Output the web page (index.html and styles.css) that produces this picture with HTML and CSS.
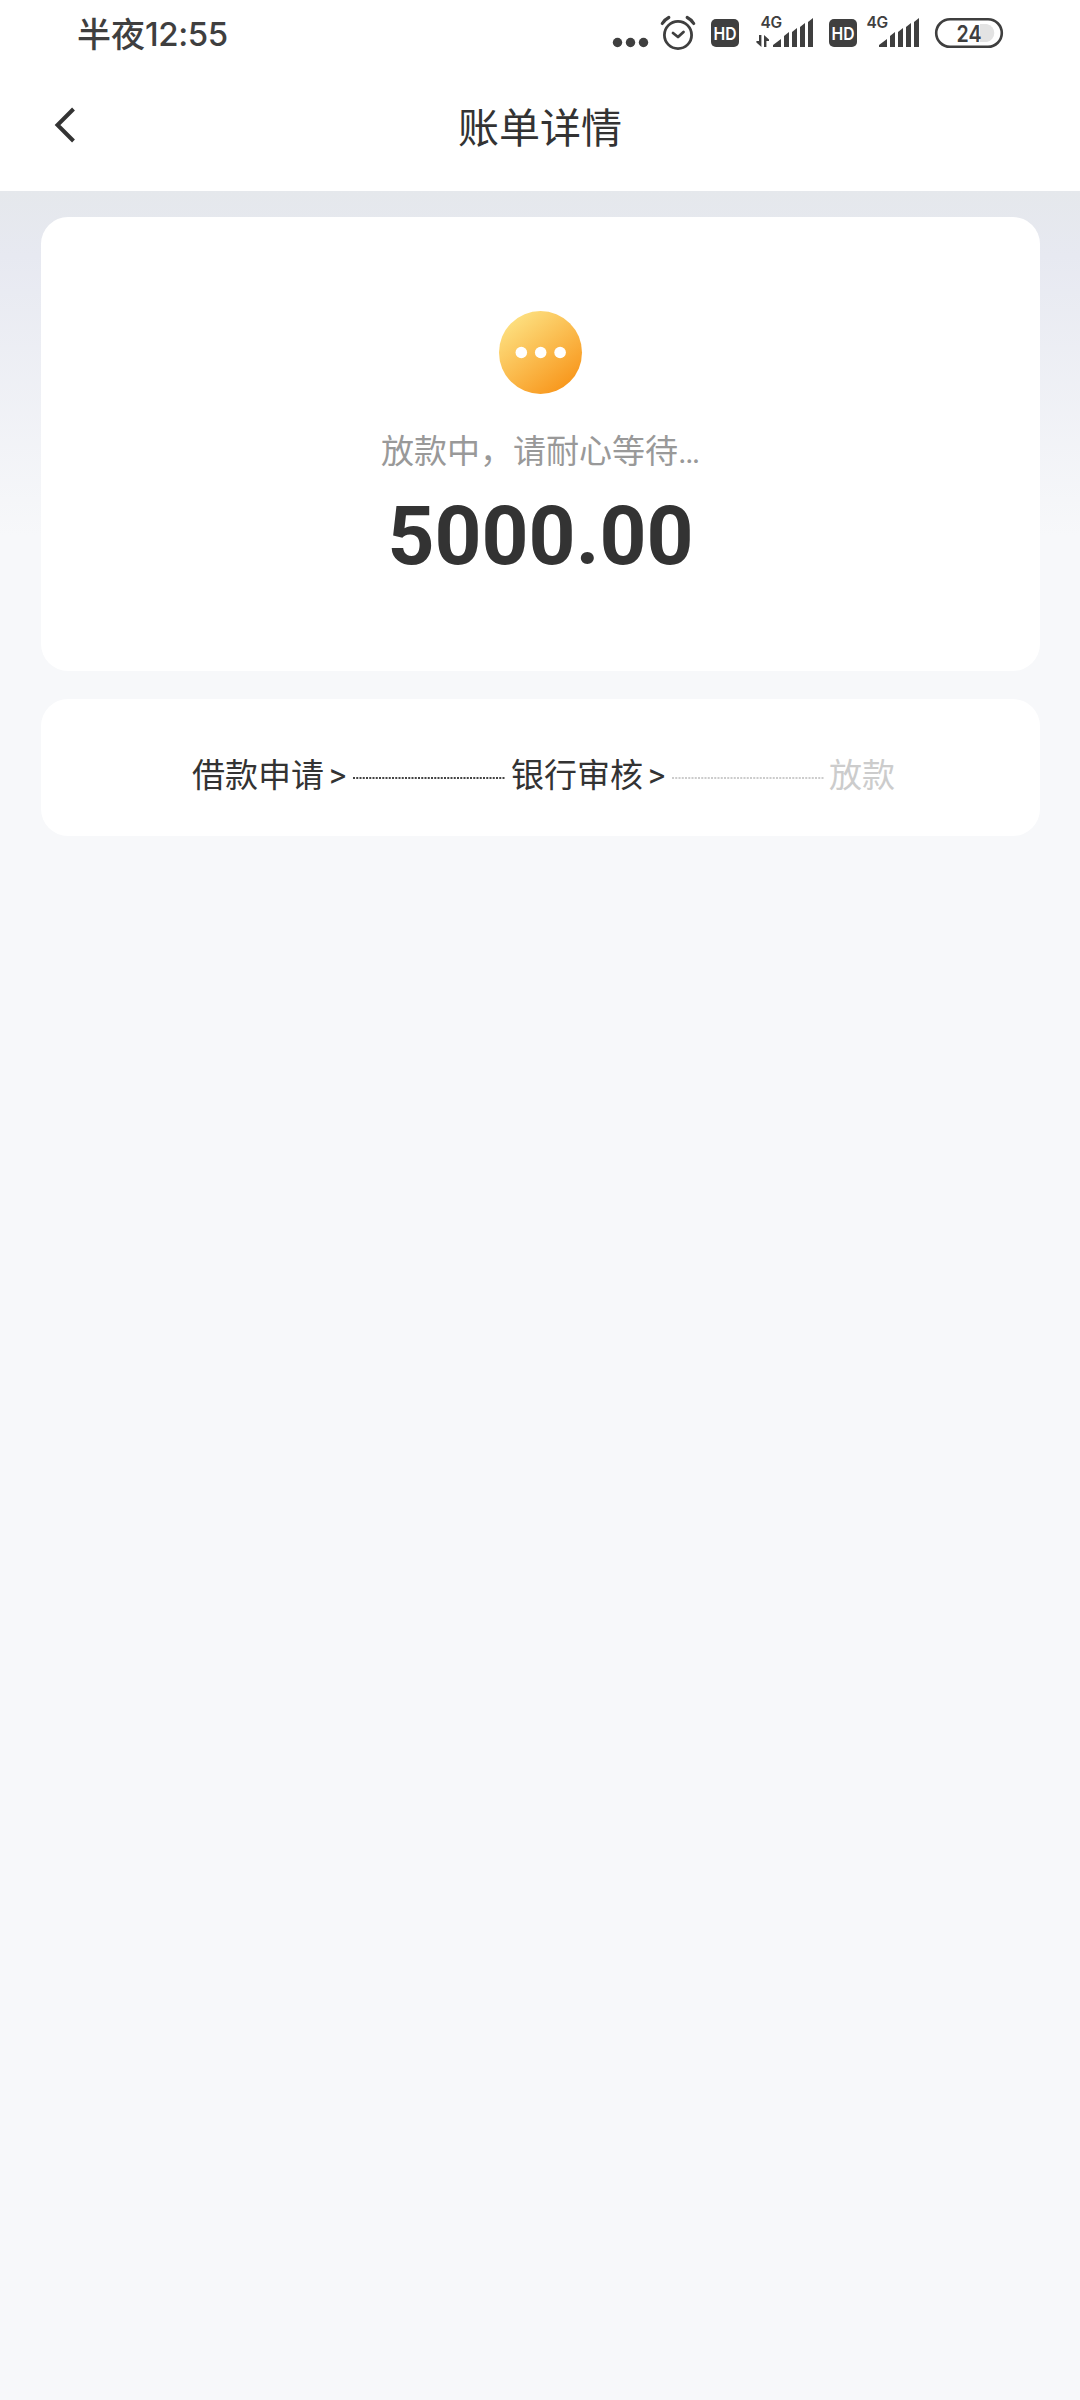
FILE: index.html
```html
<!DOCTYPE html>
<html lang="zh-CN">
<head>
<meta charset="utf-8">
<title>账单详情</title>
<link rel="stylesheet" href="styles.css">
</head>
<body>
<div class="status">
  <div class="clock"><span class="period">半夜</span><span class="time">12:55</span></div>
  <svg class="status-icons" width="400" height="64" viewBox="0 0 400 64">
    <g fill="#3f3f3f">
      <circle cx="17.5" cy="42.5" r="4.7"/><circle cx="30.5" cy="42.5" r="4.7"/><circle cx="43.5" cy="42.5" r="4.7"/>
      <rect x="111" y="19" width="28" height="28" rx="5"/>
      <rect x="229" y="19" width="28" height="28" rx="5"/>
      <path d="M173 47v-2l8-6v8zM184 47V36l5-4v15zM192 47V32l5-4v19zM200 47V27l5-4v24zM208 47V22l5-4v29z"/>
      <path d="M279 47v-2l8-6v8zM290 47V36l5-4v15zM298 47V32l5-4v19zM306 47V27l5-4v24zM314 47V22l5-4v29z"/>
      <path d="M159 35h2.400v12l-5-4.500v-1.500h2.600zM164 47h2.400V41h2.600v-1.500l-5-4.500z"/>
    </g>
    <g fill="none" stroke="#3f3f3f" stroke-width="2.800" stroke-linecap="round" stroke-linejoin="round">
      <circle cx="78" cy="35" r="13.600"/>
      <path d="M73 33l5 4 5.500-5" /><path d="M62.300 23.500q2.500-4 6.500-6M93.700 23.500q-2.500-4-6.500-6" stroke-width="3.200"/>
    </g>
    <path d="M380 24h7a9.200 9.200 0 0 1 0 18h-7z" fill="#e3e3e3"/>
    <rect x="336.200" y="19.200" width="65.600" height="27.600" rx="13.800" fill="none" stroke="#3f3f3f" stroke-width="2.600"/>
    <g class="icon-text">
      <text x="125" y="39.500" font-size="17.500" fill="#fff" text-anchor="middle" textLength="23" lengthAdjust="spacingAndGlyphs">HD</text>
      <text x="243" y="39.500" font-size="17.500" fill="#fff" text-anchor="middle" textLength="23" lengthAdjust="spacingAndGlyphs">HD</text>
      <text x="160.500" y="28" font-size="15.500" fill="#3f3f3f" textLength="21.500">4G</text>
      <text x="266.500" y="28" font-size="15.500" fill="#3f3f3f" textLength="21.500">4G</text>
      <text x="356.500" y="41.500" font-size="23" fill="#3f3f3f" textLength="25" lengthAdjust="spacingAndGlyphs">24</text>
    </g>
  </svg>
</div>
<header class="nav">
  <svg class="back" width="24" height="40" viewBox="0 0 24 40"><path d="M20.500 4L4.500 20l16 16" fill="none" stroke="#333" stroke-width="4"/></svg>
  <h1 class="title">账单详情</h1>
</header>
<main class="page">
  <section class="card summary">
    <svg class="badge" width="84" height="84" viewBox="0 0 84 84">
      <defs><linearGradient id="amber" x1="0.150" y1="0.100" x2="0.800" y2="0.950"><stop offset="0" stop-color="#fde080"/><stop offset="1" stop-color="#f8961b"/></linearGradient></defs>
      <circle cx="41.500" cy="42.500" r="41.500" fill="url(#amber)"/>
      <g fill="#fff"><circle cx="22.300" cy="42.500" r="5.800"/><circle cx="41.700" cy="42.500" r="5.800"/><circle cx="61.100" cy="42.500" r="5.800"/></g>
    </svg>
    <p class="hint">放款中，请耐心等待…</p>
    <p class="amount">5000.00</p>
  </section>
  <section class="card steps">
    <span class="step">借款申请</span><span class="arrow">&gt;</span><svg class="line" width="152" height="2"><path d="M0 1h152"/></svg>
    <span class="step">银行审核</span><span class="arrow">&gt;</span><svg class="line pending" width="152" height="2"><path d="M0 1h152"/></svg>
    <span class="step todo">放款</span>
  </section>
</main>
</body>
</html>
```
FILE: styles.css
```css
* { box-sizing: border-box; margin: 0; padding: 0; }
body {
  min-height: 2400px;
  background: #f7f8fa;
  color: #333;
  font-family: Roboto, "Noto Sans CJK SC", sans-serif;
}
.status {
  display: flex;
  justify-content: space-between;
  height: 64px;
  padding: 0 80px 0 77px;
  background: #fff;
}
.clock {
  display: flex;
  color: #3f3f3f;
  line-height: 66px;
  white-space: nowrap;
}
.period { font-family: "Noto Sans CJK SC", sans-serif; font-size: 34px; font-weight: 500; }
.time { font-family: Inter, sans-serif; font-size: 33px; font-weight: 550; letter-spacing: -0.4px; line-height: 68px; }
.status-icons { overflow: visible; }
.icon-text { font-family: Inter, sans-serif; font-weight: 600; }
.nav {
  display: grid;
  grid-template-columns: 200px 1fr 200px;
  height: 127px;
  background: #fff;
}
.back { margin: 41px 0 0 53px; }
.title {
  font-size: 41px;
  font-weight: 400;
  line-height: 60px;
  margin-top: 35px;
  text-align: center;
}
.page {
  display: flex;
  flex-direction: column;
  gap: 28px;
  min-height: 2209px;
  padding: 26px 40px 0 41px;
  background: linear-gradient(#e5e8ec 0, #e7e9f1 65px, #f7f8fa 345px);
}
.card { background: #fff; border-radius: 27px; }
.summary {
  display: flex;
  flex-direction: column;
  align-items: center;
  height: 454px;
  padding-top: 93px;
}
.hint { margin-top: 33px; color: #999; font-size: 33px; line-height: 50px; }
.amount { margin-top: 11px; font-size: 82px; font-weight: 700; line-height: 96px; }
.steps {
  display: flex;
  align-items: center;
  height: 137px;
  padding: 17px 0 0 151px;
  font-size: 33px;
  line-height: 50px;
}
.arrow { width: 23px; margin-left: 5px; }
.line {
  margin: 3px 6px 0 0;
  fill: none;
  stroke: #444;
  stroke-width: 2px;
  stroke-dasharray: 2 1.25;
}
.step + .arrow + .line { margin-left: 1px; }
.pending { stroke: #ccc; margin-right: 5px; }
.todo { color: #ccc; }
```
